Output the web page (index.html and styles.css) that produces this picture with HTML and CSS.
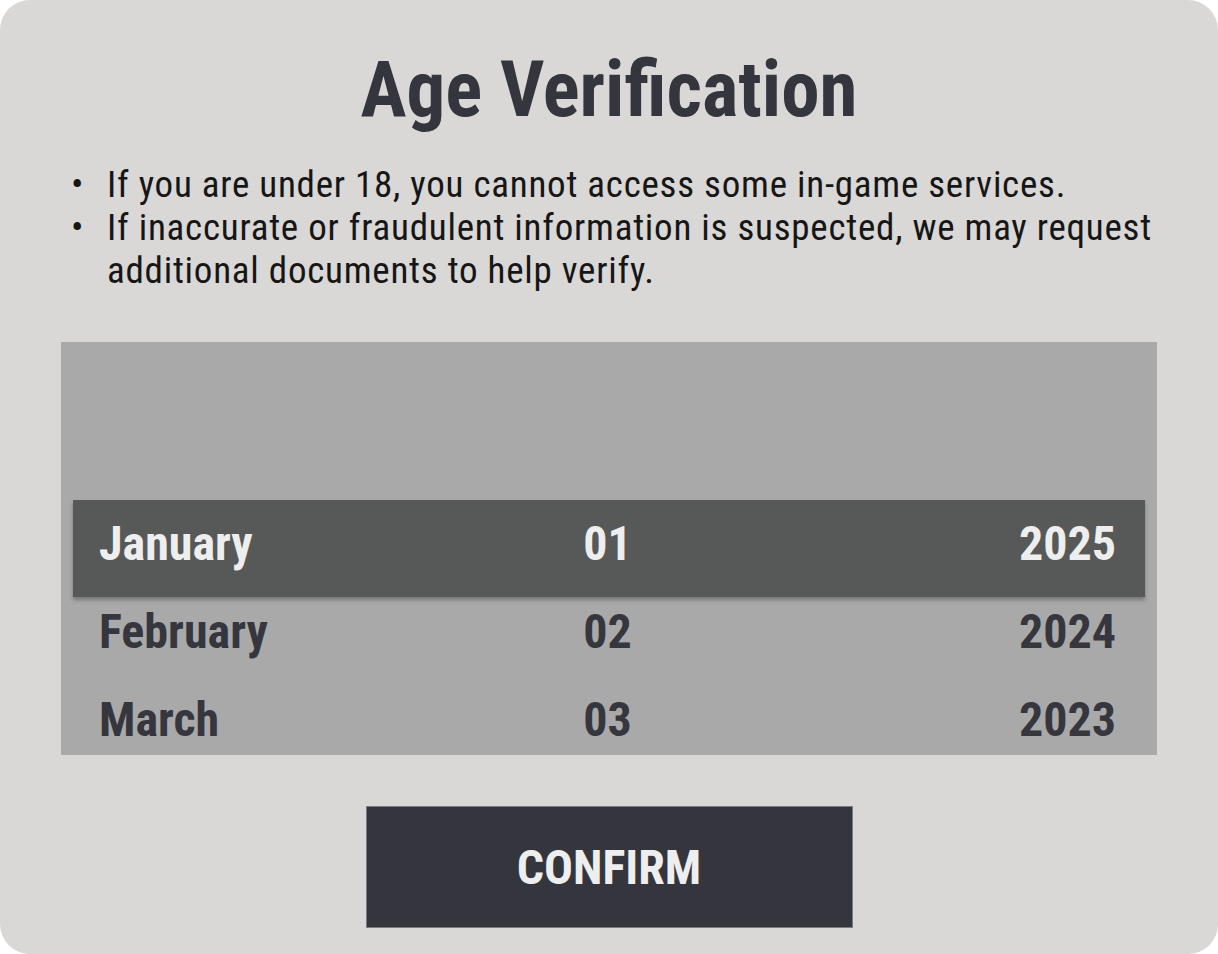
FILE: index.html
```html
<!DOCTYPE html>
<html lang="en">
<head>
<meta charset="utf-8">
<title>Age Verification</title>
<link rel="stylesheet" href="styles.css">
</head>
<body>
<main class="dialog">
  <h1 class="title">Age Verification</h1>
  <ul class="notes">
    <li>If you are under 18, you cannot access some in-game services.</li>
    <li>If inaccurate or fraudulent information is suspected, we may request additional documents to help verify.</li>
  </ul>
  <section class="picker">
    <div class="row selected"><span class="month">January</span><span class="day">01</span><span class="year">2025</span></div>
    <div class="row"><span class="month">February</span><span class="day">02</span><span class="year">2024</span></div>
    <div class="row"><span class="month">March</span><span class="day">03</span><span class="year">2023</span></div>
  </section>
  <button class="confirm" type="button">CONFIRM</button>
</main>
</body>
</html>
```

FILE: styles.css
```css
html, body {
  margin: 0;
  padding: 0;
  background: #ffffff;
}

body {
  font-family: "Roboto", "Liberation Sans", sans-serif;
  font-stretch: 75%;
}

.dialog {
  box-sizing: border-box;
  width: 1218px;
  height: 954px;
  border-radius: 30px;
  background: #d9d8d6;
  padding: 52px 61px 0;
  display: flex;
  flex-direction: column;
  align-items: stretch;
}

.title {
  margin: 0;
  font-size: 77px;
  line-height: 77px;
  font-weight: 700;
  color: #35353e;
  text-align: center;
}

.notes {
  list-style: none;
  margin: 34px 0 0 10px;
  padding: 0;
  font-size: 37px;
  line-height: 43px;
  letter-spacing: 0.75px;
  color: #161616;
}

.notes li {
  display: grid;
  grid-template-columns: 36px 1fr;
}

.notes li::before {
  content: "\2022";
}

.picker {
  box-sizing: border-box;
  margin-top: 50px;
  height: 413px;
  background: #a9a9a9;
  overflow: hidden;
  padding: 158px 12px 0;
}

.row {
  display: grid;
  grid-template-columns: 1fr auto 1fr;
  align-items: start;
  height: 88px;
  padding: 0 29px 0 26px;
  font-size: 48px;
  line-height: 88px;
  font-weight: 700;
  color: #36363e;
  position: relative;
}

.row.selected {
  height: 97px;
  box-sizing: border-box;
  padding-bottom: 9px;
  margin-bottom: -9px;
  background: #575958;
  color: #eeeeee;
  box-shadow: 0 3px 4px rgba(0, 0, 0, 0.3);
  z-index: 1;
}

.month { justify-self: start; }
.day { justify-self: center; }
.year { justify-self: end; }

.confirm {
  align-self: center;
  margin-top: 51px;
  width: 487px;
  height: 122px;
  background: #35353e;
  border: 1px solid #7c7c80;
  color: #eeeeee;
  font-family: inherit;
  font-stretch: 75%;
  font-size: 48px;
  font-weight: 700;
  padding: 0;
  cursor: pointer;
}
```
